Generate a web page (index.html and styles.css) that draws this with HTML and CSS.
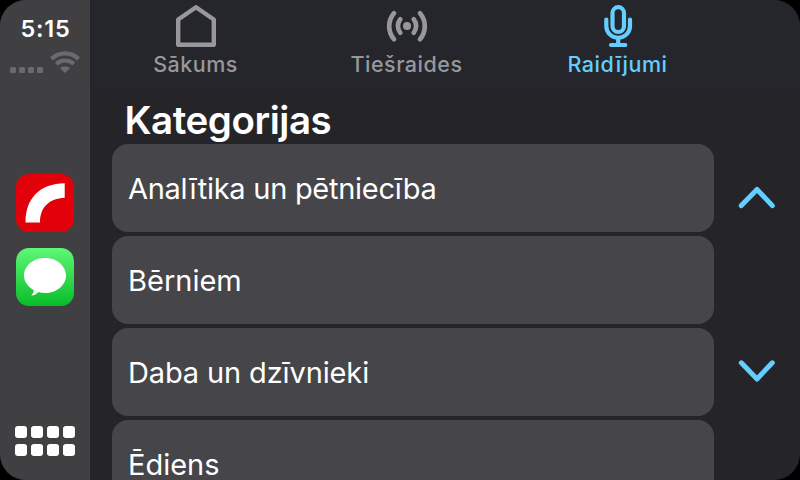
FILE: index.html
```html
<!DOCTYPE html>
<html lang="lv">
<head>
<meta charset="utf-8">
<title>Kategorijas</title>
<link rel="stylesheet" href="styles.css">
</head>
<body>
<div class="screen">
  <aside class="dock">
    <div class="clock">5:15</div>
    <div class="status">
      <span class="signal"><i></i><i></i><i></i><i></i></span>
      <svg class="wifi" width="30" height="22" viewBox="0 0 30 22" fill="none">
        <path d="M1.500 8A19 19 0 0 1 28.500 8" stroke="currentColor" stroke-width="4.400"/>
        <path d="M6.300 13.200A12.300 12.300 0 0 1 23.700 13.200" stroke="currentColor" stroke-width="4"/>
        <path d="M10 17.200A7.100 7.100 0 0 1 20 17.200L15 22Z" fill="currentColor"/>
      </svg>
    </div>
    <div class="apps">
      <svg width="58" height="58" viewBox="0 0 58 58">
        <rect width="58" height="58" rx="13" fill="#e2000a"/>
        <path d="M9.500 48.500C9.500 24 24 9.700 48.700 9.300V23.700C33 24.500 24.200 33 24 48.500Z" fill="#fff"/>
      </svg>
      <svg width="58" height="58" viewBox="0 0 58 58">
        <defs><linearGradient id="green" x2="0" y2="1"><stop stop-color="#5ff777"/><stop offset="1" stop-color="#08bd29"/></linearGradient></defs>
        <rect width="58" height="58" rx="13" fill="url(#green)"/>
        <path d="M29 10C40.600 10 50 17.800 50 27.500S40.600 45 29 45C26.700 45 24.500 44.700 22.500 44.100C20.700 46 18 47.700 15.200 47.600C17 46 17.800 44 17.700 42C11.900 38.800 8 33.500 8 27.500C8 17.800 17.400 10 29 10Z" fill="#fff"/>
      </svg>
    </div>
    <div class="launcher"><i></i><i></i><i></i><i></i><i></i><i></i><i></i><i></i></div>
  </aside>
  <main class="content">
    <nav class="tabs">
      <div class="tab">
        <svg width="44" height="52" viewBox="0 0 44 52" fill="none" stroke="currentColor" stroke-width="4.400" stroke-linejoin="round">
          <path d="M4.200 44.800V19.500L22 7.300L39.800 19.500V44.800Z"/>
        </svg>
        <span class="label">Sākums</span>
      </div>
      <div class="tab">
        <svg width="44" height="52" viewBox="0 0 44 52" fill="none" stroke="currentColor" stroke-width="4.700" stroke-linecap="round">
          <circle cx="22" cy="26" r="4" fill="currentColor" stroke="none"/>
          <path d="M15.300 19.300A10.500 10.500 0 0 0 15.300 32.700M28.700 19.300A10.500 10.500 0 0 1 28.700 32.700M9 13.300A20 20 0 0 0 9 39.300M35 13.300A20 20 0 0 1 35 39.300"/>
        </svg>
        <span class="label">Tiešraides</span>
      </div>
      <div class="tab active">
        <svg width="44" height="52" viewBox="0 0 44 52" fill="none" stroke="currentColor" stroke-width="4.200" stroke-linecap="round">
          <rect x="16.500" y="7.200" width="11.500" height="24.800" rx="5.700"/>
          <path d="M10.300 19.500V26A11.850 11.850 0 0 0 34 26V19.500M22.200 38V44M15 45H29.300"/>
        </svg>
        <span class="label">Raidījumi</span>
      </div>
    </nav>
    <h1>Kategorijas</h1>
    <div class="browser">
      <ul class="list">
        <li class="analytics">Analītika un pētniecība</li>
        <li>Bērniem</li>
        <li class="nature">Daba un dzīvnieki</li>
        <li>Ēdiens</li>
      </ul>
      <div class="scroller">
        <svg width="40" height="28" viewBox="0 0 40 28"><path d="M4.300 21.600L20 5.400L35.300 21.600"/></svg>
        <svg width="40" height="28" viewBox="0 0 40 28"><path d="M4.300 5.800L20 22L35.300 5.800"/></svg>
      </div>
    </div>
  </main>
</div>
</body>
</html>
```
FILE: styles.css
```css
* { box-sizing: border-box; }
body { margin: 0; background: #000; font-family: Inter, "Liberation Sans", sans-serif; color: #fff; }
.screen { width: 800px; height: 480px; display: flex; overflow: hidden; border-radius: 26px; background: #252529; }
.dock { width: 90px; height: 480px; flex: none; background: #404042; display: flex; flex-direction: column; align-items: center; }
.clock { height: 30px; margin-top: 14px; line-height: 30px; font-size: 23.5px; font-weight: 600; letter-spacing: 0.8px; padding-left: 1px; }
.status { width: 70px; height: 22px; margin-top: 7px; display: flex; justify-content: space-between; color: #6b6b6d; }
.signal { display: flex; gap: 3px; padding-top: 16px; }
.signal i { width: 6px; height: 6px; border-radius: 1.5px; background: currentColor; }
.wifi { display: block; }
.apps { margin-top: 101px; display: flex; flex-direction: column; gap: 16px; }
.apps svg { display: block; }
.launcher { margin-top: 120px; display: grid; grid-template-columns: repeat(4, 12px); gap: 6px 4px; }
.launcher i { height: 12px; border-radius: 3px; background: #fff; }
.content { width: 710px; height: 480px; overflow: hidden; }
.tabs { height: 88px; width: 633px; display: grid; grid-template-columns: repeat(3, 1fr); background: #25262b; box-shadow: 77px 0 #25262b; }
.tab { display: flex; flex-direction: column; align-items: center; color: #98989b; }
.tab svg { display: block; flex: none; }
.tab.active { color: #63ceff; }
.label { height: 26px; line-height: 24px; font-size: 21.5px; font-weight: 550; letter-spacing: 0.5px; white-space: nowrap; }
h1 { margin: 0; padding: 7px 0 0 34.5px; height: 56px; line-height: 50px; font-size: 38.5px; font-weight: 600; letter-spacing: -0.45px; }
.browser { display: flex; padding-left: 22px; }
.list { width: 602px; margin: 0; padding: 0; list-style: none; display: flex; flex-direction: column; gap: 4px; }
.list li { height: 88px; border-radius: 16px; background: #464549; padding-left: 16px; font-size: 29px; line-height: 90px; white-space: nowrap; }
.list .analytics { letter-spacing: -0.27px; }
.list .nature { letter-spacing: -0.13px; }
.scroller { width: 86px; height: 336px; padding-top: 40px; display: flex; flex-direction: column; align-items: center; gap: 145px; }
.scroller svg { display: block; flex: none; fill: none; stroke: #63ceff; stroke-width: 5; stroke-linecap: round; stroke-linejoin: round; }
```
